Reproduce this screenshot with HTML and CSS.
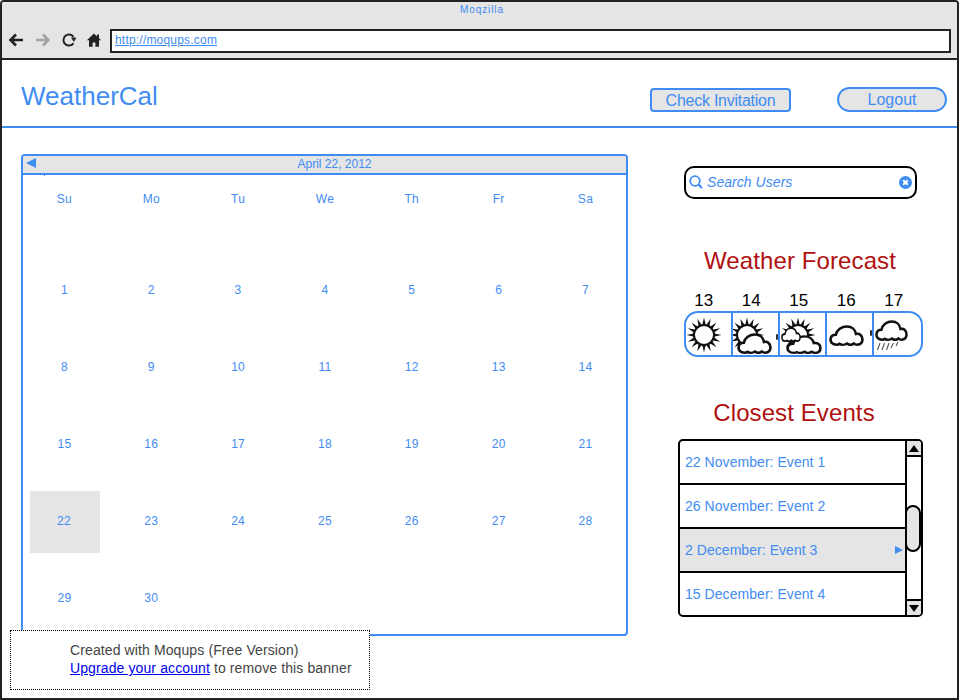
FILE: index.html
```html
<!DOCTYPE html>
<html lang="en">
<head>
    <meta charset="UTF-8">
    <title>WeatherCal</title>
    <link rel="stylesheet" href="styles.css">
</head>
<body>

<svg class="defs" width="0" height="0">
    <symbol id="sun" viewBox="-18 -18 36 36">
        <path id="ray" fill="#111" d="M0 -17.5L1.8 -9.5H-1.8ZM0 17.5L1.8 9.5H-1.8Z"/>
        <use href="#ray" transform="rotate(22.5)"/>
        <use href="#ray" transform="rotate(45)"/>
        <use href="#ray" transform="rotate(67.5)"/>
        <use href="#ray" transform="rotate(90)"/>
        <use href="#ray" transform="rotate(112.5)"/>
        <use href="#ray" transform="rotate(135)"/>
        <use href="#ray" transform="rotate(157.5)"/>
        <circle r="10" fill="#fff" stroke="#111" stroke-width="2"/>
    </symbol>
    <symbol id="cloud" viewBox="0 0 36 22" preserveAspectRatio="none">
        <path fill="#fff" stroke="#111" stroke-width="2.7" d="M8 20.6C3 20.6 1.4 17.5 1.6 15C1.8 12 4 10.2 7 10.2C8 5 13 1.6 18.5 1.6C23.5 1.6 27 5 27.8 9.4C31.5 8.6 34.4 11 34.4 15C34.4 18.8 32 20.6 29 20.6C27.5 20.6 26.5 20.2 25.5 19.4C23.5 21 20.5 21 18.5 19.4C16 21 12.5 21 10.8 19.8C10 20.4 9 20.6 8 20.6Z"/>
    </symbol>
</svg>

<div class="frame">

    <div class="browser">
        <div class="browser-title">Moqzilla</div>
        <div class="toolbar">
            <svg class="tool-icon" width="16" height="16" viewBox="0 0 16 16"><path d="M15 8H3M8 2.5L2.5 8L8 13.5" fill="none" stroke="#222" stroke-width="2.6"/></svg>
            <svg class="tool-icon" width="16" height="16" viewBox="0 0 16 16"><path d="M2 8H14M9 2.5L14.5 8L9 13.5" fill="none" stroke="#a3a3a3" stroke-width="2.6"/></svg>
            <svg class="tool-icon" width="16" height="16" viewBox="0 0 16 16"><path d="M13.5 11.2A5.5 5.5 0 1 1 13.4 4.8" fill="none" stroke="#222" stroke-width="2"/><path d="M11 5.5H16.5L13.8 10Z" fill="#222"/></svg>
            <svg class="tool-icon" width="16" height="16" viewBox="0 0 16 16"><path d="M8 1.5L0.8 8.2H3V14.8H6.6V10.4H9.4V14.8H13V8.2H15.2L13 6.2V2.4H11V4.4Z" fill="#222"/></svg>
            <div class="url-box"><a class="url" href="#">http://moqups.com</a></div>
        </div>
    </div>

    <div class="app-header">
        <div class="logo">WeatherCal</div>
        <button class="btn btn-check">Check Invitation</button>
        <button class="btn btn-logout">Logout</button>
    </div>

    <div class="content">
        <div class="calendar">
            <div class="cal-head">
                <span class="cal-prev"></span>
                <span class="cal-title">April 22, 2012</span>
            </div>
            <div class="cal-days">
                <span>Su</span><span>Mo</span><span>Tu</span><span>We</span><span>Th</span><span>Fr</span><span>Sa</span>
            </div>
            <div class="cal-grid">
                <span>1</span><span>2</span><span>3</span><span>4</span><span>5</span><span>6</span><span>7</span>
                <span>8</span><span>9</span><span>10</span><span>11</span><span>12</span><span>13</span><span>14</span>
                <span>15</span><span>16</span><span>17</span><span>18</span><span>19</span><span>20</span><span>21</span>
                <span class="today">22</span><span>23</span><span>24</span><span>25</span><span>26</span><span>27</span><span>28</span>
                <span>29</span><span>30</span>
            </div>
        </div>

        <div class="sidebar">
            <div class="search">
                <svg width="14" height="14" viewBox="0 0 14 14"><circle cx="6" cy="6" r="4.8" fill="none" stroke="#3f8cf3" stroke-width="1.8"/><path d="M9.5 9.5L13 13" stroke="#3f8cf3" stroke-width="2.2"/></svg>
                <span class="search-text">Search Users</span>
                <svg width="13" height="13" viewBox="0 0 13 13"><circle cx="6.5" cy="6.5" r="6.5" fill="#3f8cf3"/><path d="M4.2 4.2L8.8 8.8M8.8 4.2L4.2 8.8" stroke="#fff" stroke-width="2"/></svg>
            </div>

            <h2 class="side-title forecast-title">Weather Forecast</h2>
            <div class="forecast-days">
                <span>13</span><span>14</span><span>15</span><span>16</span><span>17</span>
            </div>
            <div class="forecast">
                <div class="forecast-cell">
                    <svg width="45" height="42" viewBox="0 0 45 42"><use href="#sun" x="0" y="4" width="36" height="36"/></svg>
                </div>
                <div class="forecast-cell">
                    <svg width="45" height="42" viewBox="0 0 45 42"><use href="#sun" x="-4" y="4" width="36" height="36"/><use href="#cloud" x="4" y="20" width="35" height="21"/></svg>
                </div>
                <div class="forecast-cell blob-cloud">
                    <svg width="45" height="42" viewBox="0 0 45 42"><use href="#sun" x="0" y="4" width="36" height="36"/><use href="#cloud" x="6" y="22" width="36" height="19"/><use href="#cloud" x="1" y="14" width="20" height="15"/></svg>
                </div>
                <div class="forecast-cell">
                    <svg width="45" height="42" viewBox="0 0 45 42"><use href="#cloud" x="2" y="12" width="35" height="21"/></svg>
                </div>
                <div class="forecast-cell blob-rain">
                    <svg width="45" height="42" viewBox="0 0 45 42"><use href="#cloud" x="1" y="7" width="33" height="21"/><path d="M6 30L3.5 37M10.5 30L8 37M15 30L12.5 37M19.5 30L17 35M24 29L22 33" stroke="#555" stroke-width="1.1" fill="none"/></svg>
                </div>
            </div>

            <h2 class="side-title events-title">Closest Events</h2>
            <div class="events">
                <ul class="event-list">
                    <li>22 November: Event 1</li>
                    <li>26 November: Event 2</li>
                    <li class="active">2 December: Event 3<span class="event-arrow"></span></li>
                    <li>15 December: Event 4</li>
                </ul>
                <div class="scrollbar">
                    <div class="scroll-btn scroll-up"><span></span></div>
                    <div class="scroll-track"><div class="scroll-thumb"></div></div>
                    <div class="scroll-btn scroll-down"><span></span></div>
                </div>
            </div>
        </div>
    </div>

    <div class="banner">
        Created with Moqups (Free Version)<br>
        <a href="#">Upgrade your account</a> to remove this banner
    </div>
</div>

</body>
</html>
```

FILE: styles.css
```css
* {
    box-sizing: border-box;
}
body {
    margin: 0;
    background: #fff;
    font-family: "Liberation Sans", Arial, sans-serif;
    color: #3f8cf3;
}
.defs {
    position: absolute;
}
.frame {
    position: relative;
    width: 959px;
    height: 700px;
    border: 2px solid #222;
    border-radius: 4px 4px 0 0;
    overflow: hidden;
}

/* browser chrome */
.browser {
    height: 58px;
    background: #e5e5e5;
    border-bottom: 2px solid #222;
}
.browser-title {
    height: 25px;
    padding-top: 2px;
    padding-left: 5px;
    text-align: center;
    font-size: 10px;
    letter-spacing: 0.9px;
}
.toolbar {
    display: flex;
    align-items: center;
    padding-left: 6px;
    gap: 10px;
}
.url-box {
    flex: 1;
    height: 24px;
    margin: 2px 6px 0 -2px;
    padding: 2px 3px;
    background: #fff;
    border: 2px solid #222;
    font-size: 12px;
    letter-spacing: 0.2px;
}
.url {
    color: #3f8cf3;
}

/* header */
.app-header {
    display: flex;
    align-items: flex-start;
    height: 68px;
    border-bottom: 2px solid #3f8cf3;
}
.logo {
    width: 629px;
    margin: 21px 0 0 19px;
    font-size: 26px;
    line-height: 30px;
}
.btn {
    margin: 0;
    padding: 0;
    background: #e5e5e5;
    border: 2px solid #3f8cf3;
    color: #3f8cf3;
    font-family: inherit;
    font-size: 16px;
}
.btn-check {
    width: 141px;
    height: 24px;
    margin-top: 28px;
    padding-top: 1px;
    border-radius: 4px;
    letter-spacing: -0.25px;
}
.btn-logout {
    width: 110px;
    height: 25px;
    margin: 27px 0 0 46px;
    border-radius: 13px;
}

/* calendar */
.content {
    display: flex;
    align-items: flex-start;
    padding: 26px 0 0 19px;
}
.calendar {
    width: 607px;
    height: 482px;
    border: 2px solid #3f8cf3;
    border-radius: 4px;
    overflow: hidden;
}
.cal-head {
    position: relative;
    height: 19px;
    padding-left: 20px;
    background: #e5e5e5;
    border-bottom: 2px solid #3f8cf3;
    text-align: center;
    font-size: 12px;
    line-height: 17px;
}
.cal-head::after {
    content: "";
    position: absolute;
    left: 21px;
    bottom: -3px;
    width: 1px;
    height: 1px;
    background: #3f8cf3;
}
.cal-prev {
    position: absolute;
    left: 3px;
    top: 2px;
    border-style: solid;
    border-width: 5.5px 10px 5.5px 0;
    border-color: transparent #3f8cf3 transparent transparent;
}
.cal-days,
.cal-grid {
    display: grid;
    grid-template-columns: repeat(7, 86.85px);
    margin-left: -2px;
    font-size: 12px;
    letter-spacing: 0.3px;
}
.cal-days span,
.cal-grid span {
    display: flex;
    align-items: center;
    justify-content: center;
}
.cal-days {
    height: 45px;
    padding-top: 3px;
}
.cal-grid {
    grid-auto-rows: 62px;
    row-gap: 15px;
    padding-top: 40px;
}
.cal-grid span {
    padding-bottom: 2px;
}
.cal-grid .today {
    background: #e5e5e5;
    width: 70px;
    margin-left: 9px;
    padding-right: 2px;
}

/* sidebar */
.sidebar {
    margin-left: 50px;
    width: 250px;
}
.search {
    display: flex;
    align-items: center;
    width: 233px;
    height: 33px;
    margin: 12px 0 0 6px;
    padding: 0 3px 1px 3px;
    background: #fff;
    border: 2px solid #000;
    border-radius: 10px;
}
.search-text {
    flex: 1;
    margin-left: 4px;
    font-size: 14px;
    font-style: italic;
    letter-spacing: 0.05px;
}
.side-title {
    margin: 0;
    color: #b01010;
    font-size: 24px;
    font-weight: normal;
    line-height: 28px;
    text-align: center;
    letter-spacing: 0.1px;
}
.forecast-title {
    width: 244px;
    margin: 48px 0 0;
}
.forecast-days {
    display: flex;
    width: 239px;
    height: 22px;
    margin: 14px 0 0 2px;
    color: #000;
    font-size: 17px;
    line-height: 24px;
}
.forecast-days span {
    width: 47.5px;
    text-align: center;
}
.forecast {
    display: flex;
    width: 239px;
    height: 46px;
    margin-left: 6px;
    border: 2px solid #3f8cf3;
    border-radius: 14px;
    overflow: hidden;
}
.forecast-cell {
    position: relative;
    width: 47px;
    height: 42px;
    border-right: 2px solid #3f8cf3;
}
.forecast-cell:last-child {
    border-right: none;
}
/* edge of the picture sticks out past the divider */
.blob-cloud::before,
.blob-rain::before {
    content: "";
    position: absolute;
    left: -4px;
    width: 2px;
    height: 6px;
    background: #333;
    border-radius: 1px;
}
.blob-cloud::before {
    top: 21px;
}
.blob-rain::before {
    top: 17px;
}
.events-title {
    width: 232px;
    margin: 42px 0 0;
}
.events {
    display: flex;
    width: 245px;
    height: 178px;
    margin-top: 12px;
    border: 2px solid #000;
    border-radius: 5px;
    overflow: hidden;
}
.event-list {
    flex: 1;
    margin: 0;
    padding: 0;
    list-style: none;
    font-size: 14px;
    letter-spacing: 0.05px;
}
.event-list li {
    display: flex;
    align-items: center;
    justify-content: space-between;
    height: 44px;
    padding: 0 2px 0 5px;
    border-bottom: 2px solid #000;
}
.event-list li:last-child {
    padding-bottom: 2px;
    border-bottom: none;
}
.event-list .active {
    background: #e5e5e5;
}
.event-arrow {
    border-style: solid;
    border-width: 4.5px 0 4.5px 8px;
    border-color: transparent transparent transparent #3f8cf3;
}
.scrollbar {
    display: flex;
    flex-direction: column;
    width: 16px;
    border-left: 2px solid #000;
}
.scroll-btn {
    display: flex;
    align-items: center;
    justify-content: center;
    height: 16px;
    background: #e5e5e5;
}
.scroll-up {
    border-bottom: 2px solid #000;
}
.scroll-down {
    border-top: 2px solid #000;
}
.scroll-up span,
.scroll-down span {
    border-style: solid;
    border-color: transparent;
}
.scroll-up span {
    border-width: 0 5px 7px;
    border-bottom-color: #000;
}
.scroll-down span {
    border-width: 7px 5px 0;
    border-top-color: #000;
}
.scroll-track {
    flex: 1;
    padding-top: 48px;
}
.scroll-thumb {
    height: 47px;
    margin-left: -2px;
    background: #e5e5e5;
    border: 2px solid #000;
    border-radius: 8px;
}

/* banner */
.banner {
    position: absolute;
    left: 8px;
    top: 628px;
    width: 360px;
    height: 60px;
    padding: 10px 0 0 59px;
    background: #fff;
    border: 1px dotted #000;
    color: #444;
    font-size: 14px;
    line-height: 18px;
    letter-spacing: 0.11px;
}
.banner a {
    color: #00e;
}
```
